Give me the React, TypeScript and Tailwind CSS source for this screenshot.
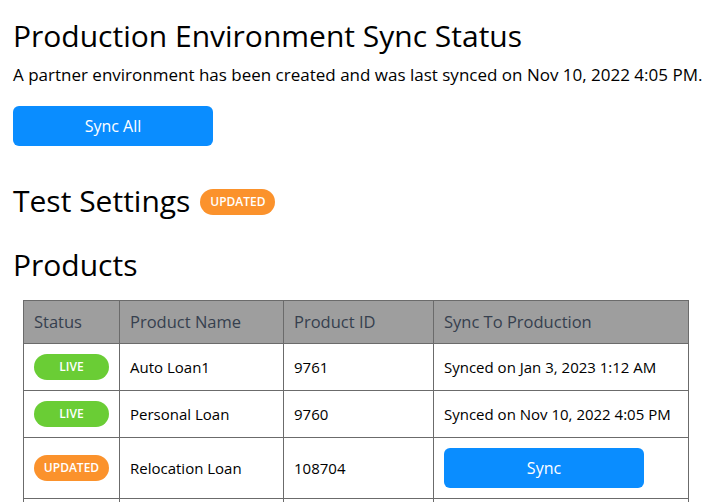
import React from 'react';

type Row = {
  status: 'LIVE' | 'UPDATED';
  name: string;
  id: string;
  synced?: string;
};

const rows: Row[] = [
  { status: 'LIVE', name: 'Auto Loan1', id: '9761', synced: 'Synced on Jan 3, 2023 1:12 AM' },
  { status: 'LIVE', name: 'Personal Loan', id: '9760', synced: 'Synced on Nov 10, 2022 4:05 PM' },
  { status: 'UPDATED', name: 'Relocation Loan', id: '108704' },
  { status: 'LIVE', name: 'Home Equity Loan', id: '9758', synced: 'Synced on Nov 10, 2022 4:05 PM' },
];

const Badge: React.FC<{ status: Row['status']; className?: string }> = ({ status, className }) => (
  <span
    className={
      'inline-flex items-center justify-center w-[75px] h-[26px] rounded-full text-[12px] font-semibold text-white ' +
      (status === 'LIVE' ? 'bg-[#6acd35] ' : 'bg-[#fb922c] ') +
      (className || '')
    }
  >
    {status}
  </span>
);

export default function App() {
  return (
    <div className="min-h-screen bg-white text-black px-[13px] font-['Open_Sans',sans-serif]">
      {/* Sync header */}
      <h1 className="pt-[18px] text-[30px] leading-[36px] font-normal">Production Environment Sync Status</h1>
      <p className="mt-[9px] text-[17px] leading-[24px]">
        A partner environment has been created and was last synced on Nov 10, 2022 4:05 PM.
      </p>
      <button className="mt-[19px] w-[200px] h-[40px] rounded-[6px] bg-[#0a8dff] text-white text-[16px]">
        Sync All
      </button>

      {/* Test settings */}
      <div className="mt-[37px] flex items-center gap-[10px]">
        <h2 className="text-[30px] leading-[36px] font-normal">Test Settings</h2>
        <Badge status="UPDATED" className="h-[25px] mt-[2px]" />
      </div>

      {/* Products */}
      <h2 className="mt-[28px] text-[30px] leading-[36px] font-normal">Products</h2>
      <table className="mt-[17px] ml-[10px] w-[666px] border-collapse text-[15px]">
        <thead>
          <tr className="bg-[#9e9e9e] text-[#36404e] h-[43px] text-[16.5px]">
            <th className="w-[96px] border border-[#6b6b6b] px-[10px] text-left font-normal">Status</th>
            <th className="w-[164px] border border-[#6b6b6b] px-[10px] text-left font-normal">Product Name</th>
            <th className="w-[150px] border border-[#6b6b6b] px-[10px] text-left font-normal">Product ID</th>
            <th className="border border-[#6b6b6b] px-[10px] text-left font-normal">Sync To Production</th>
          </tr>
        </thead>
        <tbody>
          {rows.map((r) => (
            <tr key={r.id} className={r.synced ? 'h-[47px]' : 'h-[61px]'}>
              <td className="border border-[#6b6b6b] px-[10px] align-middle">
                <Badge status={r.status} className="align-middle" />
              </td>
              <td className="border border-[#6b6b6b] px-[10px]">{r.name}</td>
              <td className="border border-[#6b6b6b] px-[10px]">{r.id}</td>
              <td className="border border-[#6b6b6b] px-[10px]">
                {r.synced ? (
                  r.synced
                ) : (
                  <button className="w-[200px] h-[40px] rounded-[6px] bg-[#0a8dff] text-white text-[16px] align-middle">
                    Sync
                  </button>
                )}
              </td>
            </tr>
          ))}
        </tbody>
      </table>
    </div>
  );
}
